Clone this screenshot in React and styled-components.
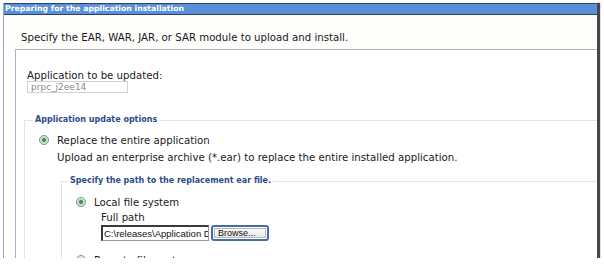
import React from 'react';
import styled, { createGlobalStyle } from 'styled-components';

const Global = createGlobalStyle`
  body {
    margin: 0;
    background: #ffffff;
    font-family: "DejaVu Sans", Verdana, sans-serif;
    color: #1a1a1a;
  }
`;

const Frame = styled.div`
  width: 597px;
  height: 258px;
  overflow: hidden;
  background: #ffffff;
  box-shadow: 3px 3px 1px rgba(40, 40, 40, 0.85);
  padding: 3px 0 0 3px;
  box-sizing: border-box;
`;

const Panel = styled.div`
  width: 640px;
  border-left: 1px solid #9aa7bd;
  height: 100%;
`;

const TitleBar = styled.div`
  height: 10px;
  line-height: 10px;
  background: #5a90d8;
  border-top: 1px solid #2e425e;
  border-bottom: 1px solid #2e425e;
  color: #ffffff;
  font-weight: bold;
  font-size: 7.75px;
  padding-left: 1px;
  white-space: nowrap;
`;

const Intro = styled.div`
  height: 34px;
  box-sizing: border-box;
  padding: 17px 0 0 17px;
  background: #fdfdfb;
  font-size: 10.2px;
  line-height: 12px;
  white-space: nowrap;
`;

const Content = styled.div`
  margin-left: 11px;
  border-top: 1px solid #a8b2c6;
  border-left: 1px solid #a8b2c6;
  padding: 0 0 0 11px;
  height: 300px;
`;

const Label = styled.div`
  font-size: 10.2px;
  line-height: 10px;
  margin-top: ${p => p.$top || 0}px;
  white-space: nowrap;
`;

const NameBox = styled.input`
  display: block;
  width: 101px;
  height: 12px;
  margin: 0;
  box-sizing: border-box;
  border: 1px solid #d2d2d2;
  color: #8a8a8a;
  background: #ffffff;
  font-family: "DejaVu Sans", Verdana, sans-serif;
  font-size: 9px;
  line-height: 10px;
  padding: 0 0 0 3px;
  outline: none;
`;

const Fieldset = styled.fieldset`
  margin: ${p => p.$top}px 0 0 ${p => p.$left}px;
  padding: ${p => p.$pad}px 0 0 14px;
  border: 1px solid #e4e4e4;
  border-right: none;
  border-bottom: none;
  min-width: 0;
`;

const Legend = styled.legend`
  padding: 0 2px;
  margin-left: ${p => p.$left}px;
  font-size: 8px;
  font-weight: bold;
  color: #2b4d88;
  line-height: 12px;
  white-space: nowrap;
`;

const RadioRow = styled.div`
  display: flex;
  align-items: center;
  gap: 8px;
  height: 14px;
  font-size: 10.2px;
  margin-top: ${p => p.$top || 0}px;
  white-space: nowrap;
`;

const Radio = styled.span`
  width: 10px;
  height: 10px;
  box-sizing: border-box;
  border-radius: 50%;
  border: 1px solid #7f8d9a;
  background: radial-gradient(circle, #f4f4f4 0%, #dcdcdc 100%);
  display: flex;
  align-items: center;
  justify-content: center;
  flex: none;
  &::after {
    content: '';
    display: ${p => (p.$checked ? 'block' : 'none')};
    width: 4px;
    height: 4px;
    border-radius: 50%;
    background: #2f9a3a;
    box-shadow: 0 0 1px 1px #a9dca9;
  }
`;

const Indent = styled.div`
  padding-left: ${p => p.$left}px;
  margin-top: ${p => p.$top || 0}px;
`;

const Text = styled.div`
  font-size: 10.2px;
  line-height: 12px;
  white-space: nowrap;
`;

const FileRow = styled.div`
  display: flex;
  align-items: center;
  gap: 2px;
  margin-top: 2px;
  height: 16px;
`;

const PathInput = styled.input`
  width: 108px;
  height: 16px;
  margin: 0;
  box-sizing: border-box;
  border: 1px solid #9a9a9a;
  border-top: 2px solid #3a3a3a;
  border-left: 2px solid #3a3a3a;
  background: #ffffff;
  color: #111111;
  font-family: "Liberation Sans", Arial, sans-serif;
  font-size: 9.5px;
  padding: 0 0 0 1px;
  outline: none;
`;

const BrowseButton = styled.button`
  width: 58px;
  height: 16px;
  margin: 0;
  box-sizing: border-box;
  border: 2px solid #4a6aa8;
  border-radius: 3px;
  padding: 1px;
  background: #ffffff;
  display: flex;
  & > span {
    flex: 1;
    text-align: left;
    background: linear-gradient(#fafafa, #e6e6e6);
    border: 1px solid #b8b8b8;
    font-family: "Liberation Sans", Arial, sans-serif;
    font-size: 9px;
    line-height: 9px;
    color: #111111;
    padding-left: 3px;
  }
`;

export default function App() {
  return (
    <>
      <Global />
      <Frame>
        <Panel>
          <TitleBar>Preparing for the application installation</TitleBar>
          <Intro>Specify the EAR, WAR, JAR, or SAR module to upload and install.</Intro>
          <Content>
            <Label $top={21}>Application to be updated:</Label>
            <NameBox readOnly value="prpc_j2ee14" />
            <Fieldset $top={21} $left={-3} $pad={7}>
              <Legend $left={-6}>Application update options</Legend>
              <RadioRow>
                <Radio $checked />
                Replace the entire application
              </RadioRow>
              <Indent $left={18} $top={5}>
                <Text>Upload an enterprise archive (*.ear) to replace the entire installed application.</Text>
              </Indent>
              <Fieldset $top={11} $left={22} $pad={8}>
                <Legend $left={-8}>Specify the path to the replacement ear file.</Legend>
                <RadioRow>
                  <Radio $checked />
                  Local file system
                </RadioRow>
                <Indent $left={25} $top={4}>
                  <Label>Full path</Label>
                  <FileRow>
                    <PathInput readOnly value="C:\releases\Application Deployment\prpc_j2ee14.ear" />
                    <BrowseButton type="button"><span>Browse...</span></BrowseButton>
                  </FileRow>
                </Indent>
                <RadioRow $top={12}>
                  <Radio />
                  Remote file system
                </RadioRow>
              </Fieldset>
            </Fieldset>
          </Content>
        </Panel>
      </Frame>
    </>
  );
}
